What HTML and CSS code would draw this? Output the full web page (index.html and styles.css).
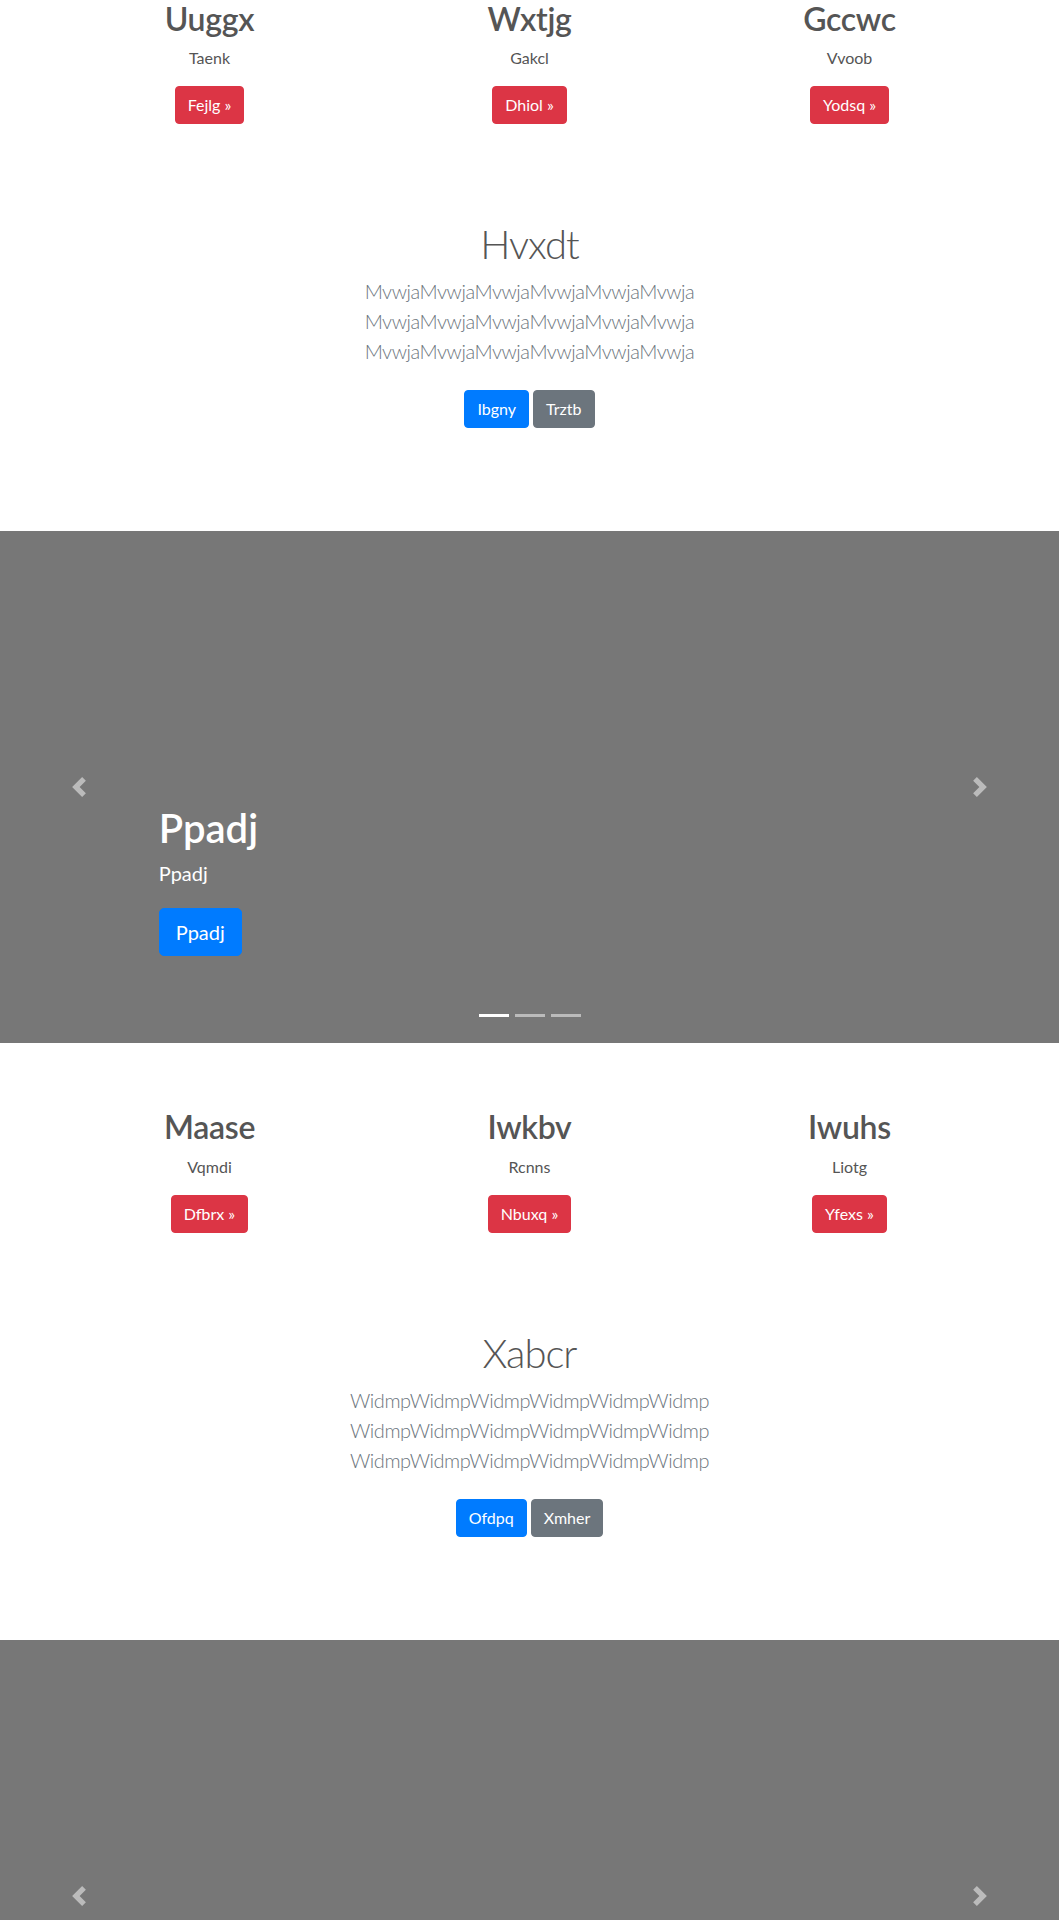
FILE: index.html
```html
<!DOCTYPE html>
<html lang="en">
<head>
<meta charset="utf-8">
<title>Carousel</title>
<link rel="stylesheet" href="styles.css">
</head>
<body>
<main>
  <section class="features">
    <div class="feature">
      <h2>Uuggx</h2>
      <p>Taenk</p>
      <div class="action"><a class="btn btn-danger" href="#">Fejlg &raquo;</a></div>
    </div>
    <div class="feature">
      <h2>Wxtjg</h2>
      <p>Gakcl</p>
      <div class="action"><a class="btn btn-danger" href="#">Dhiol &raquo;</a></div>
    </div>
    <div class="feature">
      <h2>Gccwc</h2>
      <p>Vvoob</p>
      <div class="action"><a class="btn btn-danger" href="#">Yodsq &raquo;</a></div>
    </div>
  </section>

  <section class="jumbotron">
    <h1>Hvxdt</h1>
    <p class="lead">MvwjaMvwjaMvwjaMvwjaMvwjaMvwja<br>MvwjaMvwjaMvwjaMvwjaMvwjaMvwja<br>MvwjaMvwjaMvwjaMvwjaMvwjaMvwja</p>
    <div class="actions">
      <a class="btn btn-primary" href="#">Ibgny</a>
      <a class="btn btn-secondary" href="#">Trztb</a>
    </div>
  </section>

  <section class="carousel">
    <div class="caption">
      <h1>Ppadj</h1>
      <p>Ppadj</p>
      <a class="btn btn-primary btn-lg" href="#">Ppadj</a>
    </div>
    <a class="control control-prev" href="#" aria-label="Previous">
      <svg class="control-icon" viewBox="0 0 8 8" width="20" height="20"><path d="M5.25 0l-4 4 4 4 1.5-1.5L4.25 4l2.5-2.5L5.25 0z"/></svg>
    </a>
    <a class="control control-next" href="#" aria-label="Next">
      <svg class="control-icon" viewBox="0 0 8 8" width="20" height="20"><path d="M2.75 0l-1.5 1.5L3.75 4l-2.5 2.5L2.75 8l4-4-4-4z"/></svg>
    </a>
    <ol class="indicators">
      <li class="active"></li>
      <li></li>
      <li></li>
    </ol>
  </section>

  <section class="features">
    <div class="feature">
      <h2>Maase</h2>
      <p>Vqmdi</p>
      <div class="action"><a class="btn btn-danger" href="#">Dfbrx &raquo;</a></div>
    </div>
    <div class="feature">
      <h2>Iwkbv</h2>
      <p>Rcnns</p>
      <div class="action"><a class="btn btn-danger" href="#">Nbuxq &raquo;</a></div>
    </div>
    <div class="feature">
      <h2>Iwuhs</h2>
      <p>Liotg</p>
      <div class="action"><a class="btn btn-danger" href="#">Yfexs &raquo;</a></div>
    </div>
  </section>

  <section class="jumbotron">
    <h1>Xabcr</h1>
    <p class="lead">WidmpWidmpWidmpWidmpWidmpWidmp<br>WidmpWidmpWidmpWidmpWidmpWidmp<br>WidmpWidmpWidmpWidmpWidmpWidmp</p>
    <div class="actions">
      <a class="btn btn-primary" href="#">Ofdpq</a>
      <a class="btn btn-secondary" href="#">Xmher</a>
    </div>
  </section>

  <section class="carousel">
    <a class="control control-prev" href="#" aria-label="Previous">
      <svg class="control-icon" viewBox="0 0 8 8" width="20" height="20"><path d="M5.25 0l-4 4 4 4 1.5-1.5L4.25 4l2.5-2.5L5.25 0z"/></svg>
    </a>
    <a class="control control-next" href="#" aria-label="Next">
      <svg class="control-icon" viewBox="0 0 8 8" width="20" height="20"><path d="M2.75 0l-1.5 1.5L3.75 4l-2.5 2.5L2.75 8l4-4-4-4z"/></svg>
    </a>
    <ol class="indicators">
      <li class="active"></li>
      <li></li>
      <li></li>
    </ol>
  </section>
</main>
</body>
</html>
```

FILE: styles.css
```css
* {
  box-sizing: border-box;
}

html, body {
  margin: 0;
  padding: 0;
}

body {
  font-family: Lato, "Open Sans", "Liberation Sans", sans-serif;
  color: #555;
  background: #fff;
}

/* three-column marketing row */
.features {
  display: grid;
  grid-template-columns: repeat(3, 320px);
  width: 960px;
  margin: 0 auto 96px;
  text-align: center;
}

.feature h2 {
  font-size: 32px;
  line-height: 1.2;
  font-weight: 600;
  margin: 0 0 8px;
  color: #555;
  letter-spacing: -0.3px;
}

.feature p {
  font-size: 16px;
  line-height: 24px;
  margin: 0 0 16px;
}

.action {
  display: flex;
  justify-content: center;
}

/* buttons */
.btn {
  display: inline-block;
  font-size: 16px;
  line-height: 24px;
  padding: 6px 12px;
  border: 1px solid transparent;
  border-radius: 4px;
  color: #fff;
  text-decoration: none;
  white-space: nowrap;
}

.btn-danger {
  background: #dc3545;
  border-color: #dc3545;
}

.btn-primary {
  background: #007bff;
  border-color: #007bff;
}

.btn-secondary {
  background: #6c757d;
  border-color: #6c757d;
}

.btn-lg {
  font-size: 20px;
  line-height: 30px;
  padding: 8px 16px;
  border-radius: 5px;
}

/* centered intro block */
.jumbotron {
  text-align: center;
  margin-bottom: 103px;
}

.jumbotron h1 {
  font-size: 40px;
  line-height: 48px;
  font-weight: 300;
  margin: 0 0 8px;
  color: #555;
  letter-spacing: -1px;
}

.lead {
  font-size: 20px;
  line-height: 30px;
  font-weight: 300;
  color: #6c757d;
  margin: 0 0 24px;
  letter-spacing: -0.45px;
}

.actions {
  display: flex;
  justify-content: center;
  gap: 4px;
}

/* carousel */
.carousel {
  position: relative;
  height: 512px;
  background: #777;
  margin-bottom: 65px;
  overflow: hidden;
}

.caption {
  position: absolute;
  left: 15%;
  right: 15%;
  top: 273px;
  color: #fff;
  text-align: left;
}

.caption h1 {
  font-size: 40px;
  line-height: 48px;
  font-weight: 600;
  margin: 0 0 6px;
}

.caption p {
  font-size: 20px;
  line-height: 30px;
  margin: 0 0 20px;
}

.control {
  position: absolute;
  top: 0;
  bottom: 0;
  width: 15%;
  display: flex;
  align-items: center;
  justify-content: center;
}

.control-prev {
  left: 0;
}

.control-next {
  right: 0;
}

.control-icon {
  display: block;
  fill: #fff;
  opacity: 0.5;
}

.indicators {
  position: absolute;
  left: 0;
  right: 0;
  bottom: 26px;
  margin: 0;
  padding: 0;
  list-style: none;
  display: flex;
  justify-content: center;
  gap: 6px;
}

.indicators li {
  width: 30px;
  height: 3px;
  background: #fff;
  opacity: 0.5;
}

.indicators li.active {
  opacity: 1;
}
```
